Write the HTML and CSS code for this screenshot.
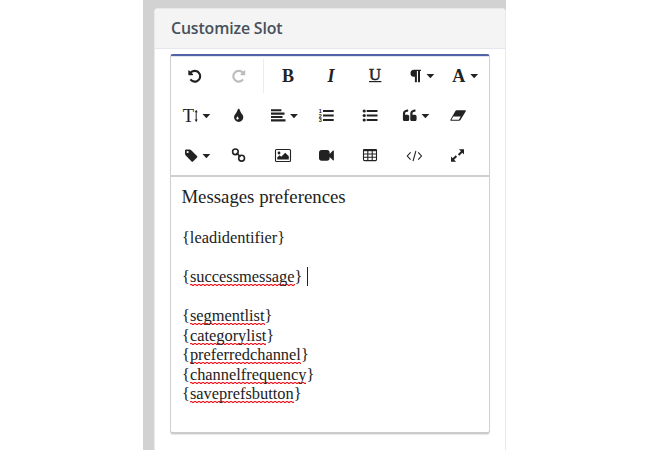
FILE: index.html
```
<!DOCTYPE html>
<html lang="en">
<head>
<meta charset="utf-8">
<title>Customize Slot</title>
<link rel="stylesheet" href="styles.css">
</head>
<body>
<svg class="defs" width="0" height="0">
  <defs>
    <path id="caret" d="M0 0h7.8L3.9 4.2z"/>
    <path id="rotate" d="M1536 896q0 156-61 298t-164 245-245 164-298 61q-172 0-327-72.5t-264-204.5q-7-10-6.5-22.5t8.5-20.5l137-138q10-9 25-9 16 2 23 12 73 95 179 147t225 52q104 0 198.5-40.5t163.5-109.5 109.5-163.5 40.5-198.5-40.5-198.5-109.5-163.5-163.5-109.5-198.5-40.5q-98 0-188 35.5t-160 101.5l137 138q31 30 14 69-17 40-59 40h-448q-26 0-45-19t-19-45v-448q0-42 40-59 39-17 69 14l130 129q107-101 244.5-156.5t284.5-55.5q156 0 298 61t245 164 164 245 61 298z"/>
    <path id="quote" d="M832 960v384q0 80-56 136t-136 56h-384q-80 0-136-56t-56-136v-704q0-104 40.5-198.5t109.5-163.5 163.5-109.5 198.5-40.5h64q26 0 45 19t19 45v128q0 26-19 45t-45 19h-64q-106 0-181 75t-75 181v32q0 40 28 68t68 28h224q80 0 136 56t56 136z"/>
  </defs>
</svg>
<div class="page">
  <section class="panel">
    <header class="panel-header">Customize Slot</header>
    <div class="editor">
      <div class="toolbar">
        <div class="row">
          <svg class="btn"><use href="#rotate" transform="translate(16.3 12.7) scale(.0084)"/></svg>
          <svg class="btn disabled"><use href="#rotate" transform="translate(29.2 12.7) scale(-.0084 .0084)"/></svg>
          <span class="divider"></span>
          <svg class="btn"><text class="glyph bold" x="23" y="26">B</text></svg>
          <svg class="btn"><text class="glyph bold italic" x="22" y="26">I</text></svg>
          <svg class="btn"><text class="glyph under" x="22" y="24">U</text><path d="M16 25h12.4v1.2H16z"/></svg>
          <svg class="btn"><path d="M17 13.8h7v1.3h-1V26.2h-2V15.1h-1.1v11.1h-2v-5.4H17a3.5 3.5 0 0 1 0-7z"/><use href="#caret" x="29.5" y="18.1"/></svg>
          <svg class="btn"><text class="glyph bold" x="17.7" y="26">A</text><use href="#caret" x="29.3" y="18.1"/></svg>
        </div>
        <div class="row">
          <svg class="btn"><text class="glyph size" x="16.4" y="25.9">T</text><path d="M23.7 15h1v10h-1zM22.7 16.3l1.5-2.6 1.5 2.6zM22.7 23.6h3l-1.5 2.6z"/><use href="#caret" x="30.5" y="18.1"/></svg>
          <svg class="btn"><path transform="translate(14.6 12.1) scale(.009)" d="M896 1152q0-36-20-69-1-1-15.5-22.5t-25.5-38-25-44-21-50.5q-4-16-21-16t-21 16q-7 23-21 50.5t-25 44-25.5 38-15.5 22.5q-20 33-20 69 0 53 37.5 90.5t90.5 37.5 90.5-37.5 37.5-90.5zm512-128q0 212-150 362t-362 150-362-150-150-362q0-145 81-275 6-9 62.5-90.5t101-151 99.5-178 83-201.5q9-30 34-47t51-17 51.5 17 33.5 47q28 93 83 201.5t99.5 178 101 151 62.5 90.5q81 127 81 275z"/></svg>
          <svg class="btn"><path d="M11 13.2h10.4v2.1H11zM11 16.6h13.5v2.1H11zM11 20h11.5v2.1H11zM11 23.3h14.5v2.1H11z"/><use href="#caret" x="30.1" y="18.1"/></svg>
          <svg class="btn"><path d="M19 13.9h10.7v2.2H19zM19 18.4h10.7v2.2H19zM19 22.9h10.7v2.2H19z"/><text class="digit" x="16.4" y="16.6">1</text><text class="digit" x="16.4" y="21.5">2</text><text class="digit" x="16.4" y="26.4">3</text></svg>
          <svg class="btn"><path d="M18.7 13.9h10.8v2.2H18.7zM18.7 18.4h10.8v2.2H18.7zM18.7 22.9h10.8v2.2H18.7z"/><circle cx="16.2" cy="15" r="1.6"/><circle cx="16.2" cy="19.5" r="1.6"/><circle cx="16.2" cy="24" r="1.6"/></svg>
          <svg class="btn"><g transform="translate(10.4 12.5) scale(.0082)"><use href="#quote"/><use href="#quote" x="896"/></g><use href="#caret" x="29.5" y="18.1"/></svg>
          <svg class="btn"><path fill-rule="evenodd" d="M20.6 14.2h8.6q1.1 0 .6 1.1L24.4 24q-.5.8-1.4.8h-8q-1.1 0-.6-1.1L19.4 15q.4-.8 1.2-.8zM17.3 20.6l-1.8 3.1h7.3l1.9-3.1z"/></svg>
        </div>
        <div class="row last">
          <svg class="btn"><path transform="translate(12 12.4) scale(.0081)" d="M576 448q0-53-37.5-90.5t-90.5-37.5-90.5 37.5-37.5 90.5 37.5 90.5 90.5 37.5 90.5-37.5 37.5-90.5zm1067 576q0 53-37 90l-491 492q-39 37-91 37-53 0-90-37l-715-716q-38-37-64.5-101t-26.5-117v-416q0-52 38-90t90-38h416q53 0 117 26.5t102 64.5l715 714q37 39 37 91z"/><use href="#caret" x="30.5" y="18.1"/></svg>
          <svg class="btn"><g class="line chain"><circle cx="19.4" cy="15.8" r="2.8"/><circle cx="25.6" cy="22.2" r="2.9"/><path d="M20.3 17.1l4.3 3.6"/></g></svg>
          <svg class="btn"><rect class="line" x="15.5" y="13.5" width="15" height="12" rx="1"/><circle cx="19" cy="17" r="1.4"/><path d="M17.3 23.5v-2.3l2.4-2 1.5 1.5 4-4 3.6 3.6v3.2z"/></svg>
          <svg class="btn"><path transform="translate(15 12) scale(.0083)" d="M1792 352v1088q0 42-39 59-13 5-25 5-27 0-45-19l-403-403v166q0 119-84.5 203.5t-203.5 84.5h-704q-119 0-203.5-84.5t-84.5-203.5v-704q0-119 84.5-203.5t203.5-84.5h704q119 0 203.5 84.5t84.5 203.5v165l403-402q18-19 45-19 12 0 25 5 39 17 39 59z"/></svg>
          <svg class="btn"><g class="line"><rect x="15.5" y="13.6" width="13" height="11" rx="1"/><path d="M15.5 18h13M15.5 21.3h13M19.8 14v10.5M24.2 14v10.5"/></g><path d="M15.3 13.2h13.4v2H15.3z"/></svg>
          <svg class="btn"><path class="line" d="M18.6 16.3L15.3 20l3.3 3.7M26.2 16.3l3.3 3.7-3.3 3.7M23.9 14.8L21 25.2"/></svg>
          <svg class="btn"><path d="M22.9 13.3H28v5.1l-1.7-1.7-3 3-1.4-1.4 3-3zM20.1 25.7H15v-5.1l1.7 1.7 3-3 1.4 1.4-3 3z"/></svg>
        </div>
      </div>
      <div class="content">
        <h2>Messages preferences</h2>
        <p>{leadidentifier}</p>
        <p>{<span class="misspelled">successmessage</span>} <span class="cursor"></span></p>
        <p>{<span class="misspelled">segmentlist</span>}<br>
        {<span class="misspelled">categorylist</span>}<br>
        {<span class="misspelled">preferredchannel</span>}<br>
        {<span class="misspelled">channelfrequency</span>}<br>
        {<span class="misspelled">saveprefsbutton</span>}</p>
      </div>
    </div>
  </section>
</div>
</body>
</html>
```
FILE: styles.css
```
* { box-sizing: border-box; }
body { margin: 0; background: #fff; overflow: hidden; }
.defs { display: block; }
.page {
  width: 363px;
  height: 450px;
  margin-left: 143px;
  padding: 8px 0 0 11px;
  background: #d2d2d2;
}
.panel {
  height: 442px;
  background: #fff;
  border: 1px solid #e9e9ec;
  border-bottom: 0;
  border-radius: 4px 4px 0 0;
}
.panel-header {
  height: 40px;
  padding-left: 16px;
  background: #f4f4f4;
  border-bottom: 1px solid #e6e6ef;
  border-radius: 4px 4px 0 0;
  color: #47505b;
  font: 600 15.9px/39px "Open Sans", sans-serif;
  letter-spacing: -.15px;
}
.editor {
  width: 320px;
  height: 380px;
  margin: 5px 0 0 15px;
  border: 1px solid #d0d0d0;
  border-top: 2px solid #5362a4;
  border-bottom: 2px solid #cbcbcb;
  border-radius: 3px;
  box-shadow: 0 1px 1px #e6e6e6;
}
.toolbar {
  height: 121px;
  padding-left: 1px;
  border-top: 1px solid #dfe3f2;
  border-bottom: 2px solid #cfcfcf;
}
.row { display: flex; height: 40px; margin-top: -1px; }
.row + .row { margin-top: 0; }
.row.last { height: 39px; }
.btn { flex: none; width: 44px; height: 40px; fill: #222; overflow: visible; }
.disabled { fill: #bdbdbd; }
.divider { width: 1px; height: 34px; margin: 3px 1px 0 3px; background: #ebebeb; }
.glyph { font: 18px "Liberation Serif", serif; text-anchor: middle; }
.bold { font-weight: 700; }
.italic { font-style: italic; }
.under { font-size: 16.5px; stroke: #222; stroke-width: .5px; }
.size { font-size: 18.5px; }
.digit { font: 700 5.5px "Liberation Sans", sans-serif; text-anchor: middle; }
.line { fill: none; stroke: #222; stroke-width: 1.1px; }
.chain { stroke-width: 1.6px; }
.content {
  padding: 9px 0 0 11px;
  color: #222;
  font: 16.4px/19.6px "Liberation Serif", serif;
}
.content h2 { margin: 0 0 19.6px -.6px; font-size: 18.8px; font-weight: 400; line-height: 22px; }
.content p { margin: 0 0 19.6px; }
.misspelled {
  background:
    linear-gradient(90deg, #f01820 50%, #f8a0a4 50%) 0 calc(100% - 1px) / 4px 1px repeat-x,
    linear-gradient(90deg, #fbc4c6 50%, #f01820 50%) 0 100% / 4px 1px repeat-x;
}
.cursor { display: inline-block; width: 1px; height: 19px; margin-left: .5px; vertical-align: -4px; background: #222; }
```
